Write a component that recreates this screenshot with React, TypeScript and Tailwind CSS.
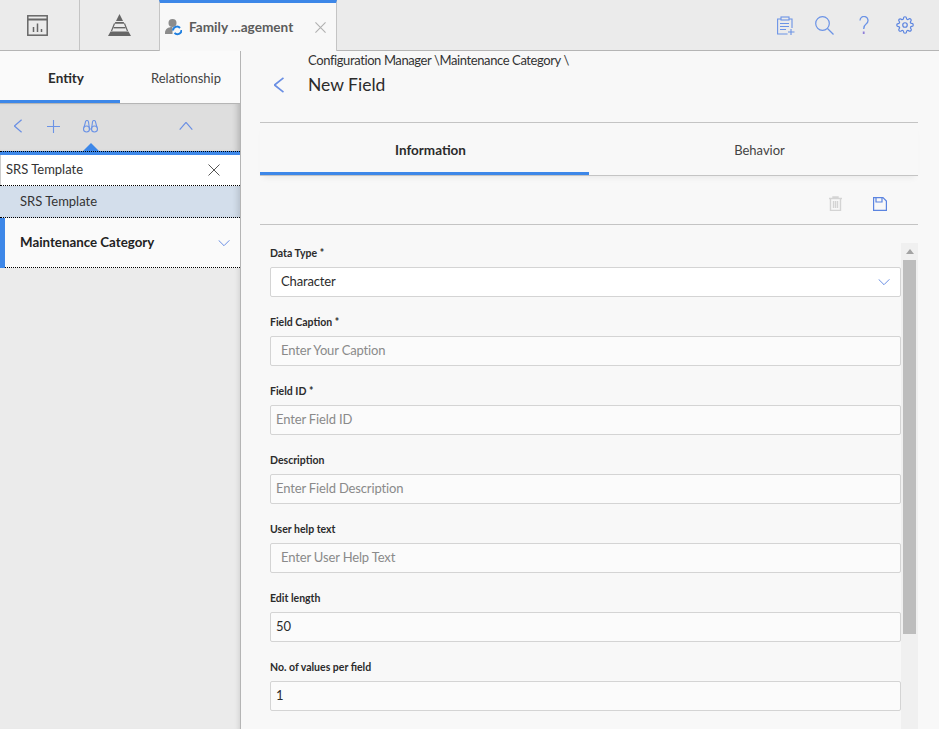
import type { ReactElement, ReactNode } from "react";

/** One labelled form row. */
function Field({
  label,
  value,
  placeholder,
  trailing,
  inset = "pl-[5px]",
  white = false,
}: {
  label: string;
  value?: string;
  placeholder?: string;
  trailing?: ReactNode;
  inset?: string;
  white?: boolean;
}): ReactElement {
  return (
    <div className="flex flex-col">
      <div className="flex h-[24px] items-start text-[10.500px] leading-[20px] font-bold text-[#2b2b2b]">{label}</div>
      <div
        className={
          "flex h-[30px] items-center justify-between rounded-[2px] border border-[#d4d4d4] pr-[10px] pb-[1px] text-[13px] tracking-[-0.15px] " +
          (white ? "bg-white" : "bg-[#fbfbfb]")
        }
      >
        {value !== undefined ? (
          <span className={inset + " text-[#2b2b2b]"}>{value}</span>
        ) : (
          <span className={inset + " text-[#8a8a8a]"}>{placeholder}</span>
        )}
        {trailing}
      </div>
    </div>
  );
}

function Chevron({
  dir,
  className,
  width = 1.2,
}: {
  dir: "left" | "up" | "down";
  className: string;
  width?: number;
}): ReactElement {
  const d = dir === "left" ? "M9.500 .5 .5 5l9 4.500" : dir === "up" ? "M.5 9.500 5 .5l4.500 9" : "M.5 .5 5 9.500 9.500 .5";
  return (
    <svg viewBox="0 0 10 10" preserveAspectRatio="none" className={className} fill="none" stroke="#6a8fe4">
      <path d={d} strokeWidth={width} vectorEffect="non-scaling-stroke" />
    </svg>
  );
}

export default function App(): ReactElement {
  return (
    <div className="flex h-[729px] w-[939px] flex-col overflow-hidden bg-[#f8f8f8] font-['Lato',sans-serif] text-[#2b2b2b]">
      {/* top bar */}
      <header className="flex h-[51px] shrink-0 items-stretch border-b border-[#b5b5b5] bg-[#ebebeb]">
        <div className="flex w-[80px] items-center justify-center border-r border-[#c4c4c4] pr-[4px]">
          <svg viewBox="0 0 21 21" className="h-[21px] w-[21px]" fill="none" stroke="#666" strokeWidth="1.500">
            <rect x=".8" y=".8" width="19.400" height="19.400" />
            <path d="M1 4.500h19" strokeWidth="2" />
            <path d="M6.500 17v-5M10.500 17V8.500M14.500 17v-3" />
          </svg>
        </div>
        <div className="flex w-[79px] items-center justify-center">
          <svg viewBox="0 0 23 22" className="h-[22px] w-[23px]" fill="#666">
            <path d="M11.500 0 15 7H8z" />
            <path d="M7.300 8h8.400l.8 1.700H6.500z" />
            <path d="M6.500 9.500 3.500 17M16.500 9.500l3 7.500" stroke="#666" strokeWidth="1.200" fill="none" />
            <path d="M5.500 13h12v1.400h-12z" />
            <path d="M2.500 17.500h18L23 22H0z" />
          </svg>
        </div>
        <div className="-mb-px flex w-[178px] items-center border-x border-[#c4c4c4] border-t-[3px] border-t-[#3d87e8] bg-[#f8f8f8] pr-[10px] pl-[5px]">
          <svg viewBox="0 0 17 18" className="h-[18px] w-[17px] shrink-0">
            <circle cx="7.500" cy="5" r="4" fill="#8c8c8c" />
            <path d="M0 15c0-4 3-6 7.500-6V16H0z" fill="#8c8c8c" />
            <path d="M8 12.500a4 4 0 0 1 7-2.500M16.500 12a4 4 0 0 1-7 2.800" fill="none" stroke="#1f7fe0" strokeWidth="2" />
          </svg>
          <span className="ml-[7px] text-[13.600px] font-bold whitespace-nowrap text-[#5c5c5c]">Family ...agement</span>
          <svg viewBox="0 0 12 12" className="ml-auto h-[11px] w-[11px]" stroke="#b0b0b0" strokeWidth="1.200">
            <path d="M.5.500l11 11M11.500.500l-11 11" />
          </svg>
        </div>
        <div className="ml-auto flex items-center pr-[25px]">
          <svg viewBox="0 0 18 19" className="h-[19px] w-[18px]" fill="none" stroke="#6b93e6" strokeWidth="1.100">
            <path d="M4 3H.6v15h10M12 3h3v9" />
            <rect x="4" y="1" width="8" height="3" />
            <path d="M3 7.500h9M3 10.500h9M3 13.500h6M14 13v6M11 16h6.500" />
          </svg>
          <svg viewBox="0 0 19 19" className="ml-[20px] h-[19px] w-[19px]" fill="none" stroke="#6b93e6" strokeWidth="1.200">
            <circle cx="7.500" cy="7.500" r="6.800" />
            <path d="M12.500 12.500l6 6" />
          </svg>
          <svg viewBox="0 0 10 19" className="ml-[25px] h-[19px] w-[10px]" fill="none" stroke="#6b93e6" strokeWidth="1.300">
            <path d="M1 4.500a4 4 0 1 1 6.300 3.200C5.500 9 4.700 10 4.700 13" />
            <path d="M4.700 15.500v2.500" strokeWidth="1.800" stroke="#8f7fd8" />
          </svg>
          <svg viewBox="0 0 24 24" className="ml-[27px] h-[18px] w-[18px]" fill="none" stroke="#5b84e0" strokeWidth="1.600">
            <circle cx="12" cy="12" r="3" />
            <path d="M19.400 15a1.650 1.650 0 0 0 .33 1.820l.06.06a2 2 0 1 1-2.830 2.830l-.06-.06a1.650 1.650 0 0 0-2.820 1.170V21a2 2 0 1 1-4 0v-.09A1.650 1.650 0 0 0 7.200 19.700l-.06.06a2 2 0 1 1-2.830-2.830l.06-.06a1.650 1.650 0 0 0-1.170-2.820H3a2 2 0 1 1 0-4h.09A1.650 1.650 0 0 0 4.300 7.200l-.06-.06a2 2 0 1 1 2.830-2.830l.06.06a1.650 1.650 0 0 0 2.820-1.170V3a2 2 0 1 1 4 0v.09a1.650 1.650 0 0 0 2.820 1.170l.06-.06a2 2 0 1 1 2.830 2.830l-.06.06a1.650 1.650 0 0 0 1.170 2.820H21a2 2 0 1 1 0 4h-.09A1.650 1.650 0 0 0 19.400 15z" />
          </svg>
        </div>
      </header>

      <div className="flex min-h-0 flex-1">
        {/* left panel */}
        <aside className="flex w-[241px] shrink-0 flex-col border-r border-[#b5b5b5] bg-[#ebebeb] shadow-[inset_-5px_0_5px_-4px_rgba(0,0,0,0.12)]">
          <div className="flex h-[52px] shrink-0 bg-[#fafafa] text-[13px]">
            <div className="flex w-[120px] items-center justify-center border-b-[3px] border-[#3d87e8] pt-[5px] pl-[12px] text-[13.500px] font-bold">
              Entity
            </div>
            <div className="flex w-[120px] items-center justify-center pt-[4px] pl-[12px] text-[#444]">Relationship</div>
          </div>
          <div className="relative flex h-[48px] shrink-0 items-center border-t border-[#b5b5b5] bg-[#dedede] pb-[3px] pl-[14px] shadow-[inset_-6px_0_6px_-4px_rgba(0,0,0,0.2)]">
            <Chevron dir="left" className="h-[14px] w-[8px]" />
            <svg viewBox="0 0 13 13" className="ml-[25px] h-[13px] w-[13px]" stroke="#6b93e6" strokeWidth="1.100">
              <path d="M6.500 0v13M0 6.500h13" />
            </svg>
            <svg viewBox="0 0 15 13" className="ml-[23px] h-[13px] w-[15px]" fill="none" stroke="#6b93e6" strokeWidth="1.100">
              <circle cx="3.500" cy="9" r="3" />
              <circle cx="11.500" cy="9" r="3" />
              <path d="M1 7.500 2.500 2a1.500 1.500 0 0 1 3 0L6.500 9h2L9.500 2a1.500 1.500 0 0 1 3 0L14 7.500" />
            </svg>
            <Chevron dir="up" className="ml-[81px] h-[8px] w-[14px]" />
            <div className="absolute bottom-0 left-[83px] h-0 w-0 border-x-[8px] border-b-[8px] border-x-transparent border-b-[#3d87e8]" />
          </div>
          <div className="h-[4px] shrink-0 border-t border-dotted border-black bg-[#3d87e8]" />
          <div className="flex h-[31px] shrink-0 items-center justify-between border-b border-dotted border-black bg-white pr-[20px] pb-[1px] pl-[6px] text-[13px] text-[#333] shadow-[inset_1px_0_0_#cccccc]">
            <span>SRS Template</span>
            <svg viewBox="0 0 12 12" className="h-[12px] w-[12px]" stroke="#555" strokeWidth="1">
              <path d="M.5.500l11 11M11.500.500l-11 11" />
            </svg>
          </div>
          <div className="flex h-[32px] shrink-0 items-center border-b border-dotted border-black bg-[#d3deeb] pl-[20px] text-[13px] text-[#333] shadow-[inset_-6px_0_6px_-4px_rgba(0,0,0,0.15)]">
            SRS Template
          </div>
          <div className="flex h-[50px] shrink-0">
            <div className="w-[5px] bg-[#3d87e8]" />
            <div className="flex flex-1 items-center justify-between border-b border-dotted border-black bg-[#fafafa] pr-[10px] pl-[15px] text-[13.300px] font-bold text-[#222]">
              <span>Maintenance Category</span>
              <Chevron dir="down" className="h-[6px] w-[12px]" width={1} />
            </div>
          </div>
        </aside>

        {/* right panel */}
        <main className="flex min-w-0 flex-1 flex-col pr-[21px] pl-[19px]">
          <div className="flex h-[72px] shrink-0 flex-col border-b border-[#c4c4c4] pl-[48px]">
            <div className="text-[13px] leading-[18px] tracking-[-0.4px] text-[#333]">Configuration Manager \Maintenance Category \</div>
            <div className="relative mt-[4px] text-[17.500px] leading-[24px] text-[#2b2b2b]">
              New Field
              <Chevron dir="left" className="absolute top-[4px] -left-[34px] h-[16px] w-[10px]" width={1.7} />
            </div>
          </div>
          <div className="relative flex h-[53px] shrink-0 border-b border-[#c4c4c4] text-[13px] shadow-[0_5px_6px_-3px_rgba(0,0,0,0.06)]">
            <div className="flex w-[329px] items-center justify-center border-b-[3px] border-[#3d87e8] pt-[5px] pl-[12px] text-[13.500px] font-bold">
              Information
            </div>
            <div className="flex flex-1 items-center justify-center pt-[4px] pl-[12px] text-[#444]">Behavior</div>
          </div>
          <div className="flex h-[49px] shrink-0 items-center justify-end gap-[31px] border-b border-[#c4c4c4] pt-[7px] pr-[31px]">
            <svg viewBox="0 0 13 15" className="h-[15px] w-[13px]" fill="none" stroke="#d4d4d4" strokeWidth="1.400">
              <path d="M0 2.500h13M4 2.500V1h5v1.500M1.500 2.500v12h10v-12M4.500 5v7M6.500 5v7M8.500 5v7" />
            </svg>
            <svg viewBox="0 0 14 14" className="h-[14px] w-[14px]" fill="none" stroke="#5b84e0" strokeWidth="1.200">
              <path d="M.6.6h9.400l3.400 3.400v9.400H.6zM3 .6v4.400h6V.6" />
            </svg>
          </div>
          <div className="flex min-h-0 flex-1 pt-[18px]">
            <div className="flex min-w-0 flex-1 flex-col gap-[15px] pl-[10px]">
              <Field
                label="Data Type *"
                value="Character"
                inset="pl-[10px]"
                white
                trailing={<Chevron dir="down" className="h-[6px] w-[12px]" width={1} />}
              />
              <Field label="Field Caption *" placeholder="Enter Your Caption" inset="pl-[10px]" />
              <Field label="Field ID *" placeholder="Enter Field ID" />
              <Field label="Description" placeholder="Enter Field Description" />
              <Field label="User help text" placeholder="Enter User Help Text" inset="pl-[10px]" />
              <Field label="Edit length" value="50" />
              <Field label="No. of values per field" value="1" />
            </div>
            <div className="flex w-[17px] shrink-0 flex-col items-center bg-[#f0f0f0]">
              <div className="flex h-[17px] items-center">
                <div className="h-0 w-0 border-x-[4px] border-b-[5px] border-x-transparent border-b-[#a3a3a3]" />
              </div>
              <div className="h-[374px] w-[13px] bg-[#bdbdbd]" />
            </div>
          </div>
        </main>
      </div>
    </div>
  );
}
